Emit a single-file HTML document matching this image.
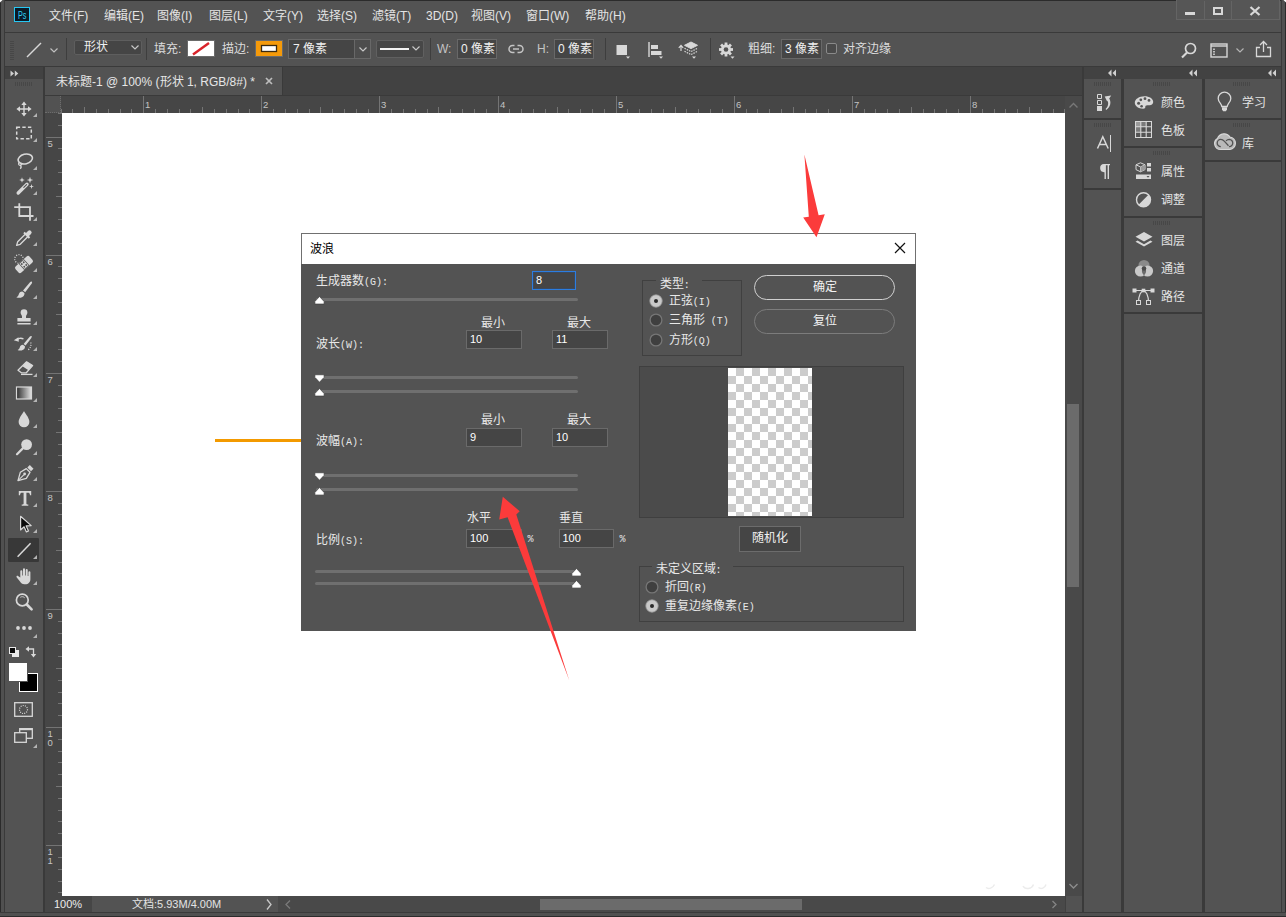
<!DOCTYPE html>
<html lang="zh-CN">
<head>
<meta charset="utf-8">
<title>Photoshop - 波浪</title>
<style>
*{box-sizing:border-box;margin:0;padding:0}
html,body{width:1286px;height:917px;overflow:hidden;background:#535353;font-family:"Liberation Sans",sans-serif}
body{font-family:"Liberation Sans",sans-serif;font-size:12px;color:#dcdcdc;position:relative}
.abs{position:absolute}
#app{position:absolute;left:0;top:0;width:1286px;height:917px;background:#535353;overflow:hidden}
/* frame */
.frame-l{left:0;top:0;width:5px;height:917px;background:#505050;border-left:1px solid #2b2b2b;border-right:1px solid #3a3a3a}
.frame-r{left:1281px;top:0;width:5px;height:917px;background:#505050;border-right:1px solid #2b2b2b;border-left:1px solid #3a3a3a}
.frame-b{left:0;top:912px;width:1286px;height:5px;background:#505050;border-bottom:1px solid #2b2b2b;border-top:1px solid #3a3a3a}
.frame-t{left:0;top:0;width:1286px;height:1px;background:#2b2b2b}
/* menubar */
#menubar{left:5px;top:1px;width:1276px;height:31px;background:#535353}
#menubar .m{position:absolute;top:7px;font-size:12px;color:#e4e4e4;white-space:nowrap;line-height:16px}
.sepH{background:#3a3a3a;height:1px}
/* options bar */
#optbar{left:5px;top:33px;width:1276px;height:33px;background:#535353}
#optbar .t{position:absolute;top:8px;line-height:16px;font-size:12px;color:#dcdcdc;white-space:nowrap}
.inp{position:absolute;background:#454545;border:1px solid #686868;color:#f0f0f0;font-size:12px;line-height:17px;padding-left:4px;white-space:nowrap}
.vsep{position:absolute;width:1px;background:#3e3e3e}
/* toolbox */
#tools{left:5px;top:67px;width:38px;height:845px;background:#535353}
#tools .hd{position:absolute;left:0;top:0;width:38px;height:12px;background:#424242}
/* doc */
#doc{left:45px;top:67px;width:1037px;height:845px;background:#424242}
#tab{left:0;top:0;width:238px;height:29px;background:#535353;border-right:1px solid #3a3a3a}
#tab .t{position:absolute;left:11px;top:7px;font-size:12px;line-height:16px;color:#e6e6e6;white-space:nowrap}
.hr text,.vr text{font-family:"Liberation Sans",sans-serif;font-size:9.5px;fill:#c4c4c4}
#canvas{left:62px;top:113px;width:1003px;height:783px;background:#fff}
/* right panels */
.pcol{position:absolute;background:#535353}
.phd{position:absolute;background:#424242;height:12px}
.pitem{position:absolute;font-size:12px;color:#e4e4e4;line-height:16px;white-space:nowrap}
.grip{height:4px;background:repeating-linear-gradient(90deg,#474747 0,#474747 1px,transparent 1px,transparent 2px)}
.grip2{width:4px;height:20px;background:repeating-linear-gradient(0deg,#474747 0,#474747 1px,transparent 1px,transparent 2px)}
/* dialog */
#dlg{left:301px;top:233px;width:615px;height:398px;background:#535353}
#dlg .title{position:absolute;left:0;top:0;width:615px;height:31px;background:#fff;border:1px solid #707070;border-bottom:none}
#dlg .title span{position:absolute;left:8px;top:7px;font-size:12px;color:#000;line-height:16px}
.dt{position:absolute;font-size:12px;line-height:14px;color:#e8e8e8;white-space:nowrap}
.dt i{font-style:normal;font-family:"Liberation Mono",monospace;font-size:10px;letter-spacing:0;line-height:0}
.din i{font-style:normal;font-family:"Liberation Sans",sans-serif;font-size:11px}
.din{position:absolute;background:#454545;border:1px solid #6a6a6a;color:#fff;font-size:11px;line-height:16px;padding-left:3px}
.trk{position:absolute;height:3px;background:#6f6f6f;border-radius:1.5px}
</style>
</head>
<body>
<div id="app">
  <div class="abs frame-t"></div>
  <div class="abs frame-l"></div>
  <div class="abs frame-r"></div>
  <div class="abs frame-b"></div>
  <svg class="abs" style="left:0;top:0" width="3" height="3" viewBox="0 0 3 3"><path d="M0 0H2.500L0 2.500Z" fill="#fff"/></svg>
  <svg class="abs" style="left:1283px;top:0" width="3" height="3" viewBox="0 0 3 3"><path d="M3 0H0.500L3 2.500Z" fill="#fff"/></svg>

  <!-- MENUBAR -->
  <div id="menubar" class="abs">
    <div class="abs" style="left:9px;top:6px;width:16px;height:15px;background:#0a1a26;border:1px solid #27c7f3"></div><span class="abs" style="left:13px;top:9px;font-size:10px;line-height:11px;font-weight:normal;color:#2fd0f8;letter-spacing:0;transform:scaleX(.72);transform-origin:0 0">Ps</span>
    <span class="m" style="left:44px">文件(F)</span>
    <span class="m" style="left:99px">编辑(E)</span>
    <span class="m" style="left:152px">图像(I)</span>
    <span class="m" style="left:204px">图层(L)</span>
    <span class="m" style="left:258px">文字(Y)</span>
    <span class="m" style="left:312px">选择(S)</span>
    <span class="m" style="left:367px">滤镜(T)</span>
    <span class="m" style="left:421px">3D(D)</span>
    <span class="m" style="left:466px">视图(V)</span>
    <span class="m" style="left:521px">窗口(W)</span>
    <span class="m" style="left:580px">帮助(H)</span>
    <div class="abs" style="left:1171px;top:-1px;width:104px;height:20px;background:#565656;border:1px solid #646464;border-top:none"></div>
    <div class="abs" style="left:1199px;top:0;width:1px;height:18px;background:#646464"></div>
    <div class="abs" style="left:1226px;top:0;width:1px;height:18px;background:#646464"></div>
    <div class="abs" style="left:1180px;top:11px;width:10px;height:3px;background:#d8d8d8"></div>
    <div class="abs" style="left:1208px;top:6px;width:10px;height:8px;border:2px solid #d8d8d8"></div>
    <svg class="abs" style="left:1244px;top:5px" width="12" height="10" viewBox="0 0 12 10"><path d="M1.500 1L10.500 9M10.500 1L1.500 9" stroke="#d8d8d8" stroke-width="2.200"/></svg>
  </div>
  <div class="abs sepH" style="left:5px;top:32px;width:1276px"></div>

  <!-- OPTIONS BAR -->
  <div id="optbar" class="abs">
    
    <div class="abs grip2" style="left:5px;top:7px"></div>
    <svg class="abs" style="left:20px;top:8px" width="18" height="18" viewBox="0 0 18 18"><path d="M2 16L16 2" stroke="#d8d8d8" stroke-width="1.400"/></svg>
    <svg class="abs" style="left:44px;top:14px" width="10" height="7" viewBox="0 0 10 7"><path d="M1.500 1.500L5 5L8.500 1.500" stroke="#c0c0c0" stroke-width="1.200" fill="none"/></svg>
    <div class="vsep" style="left:61px;top:5px;height:22px"></div>
    <div class="inp" style="left:69px;top:7px;width:68px;height:15px;line-height:13px;padding-left:9px;background:#454545;border-color:#5e5e5e;border-radius:2px">形状</div>
    <svg class="abs" style="left:125px;top:11px" width="10" height="7" viewBox="0 0 10 7"><path d="M1.500 1.500L5 5L8.500 1.500" stroke="#c8c8c8" stroke-width="1.200" fill="none"/></svg>
    <div class="vsep" style="left:141px;top:5px;height:22px"></div>
    <span class="t" style="left:149px">填充:</span>
    <svg class="abs" style="left:182px;top:7px" width="28" height="17" viewBox="0 0 28 17"><rect x="0.500" y="0.500" width="27" height="16" fill="#fff" stroke="#6a6a6a"/><path d="M6 14.500L22 3" stroke="#d8232a" stroke-width="2.400"/></svg>
    <span class="t" style="left:217px">描边:</span>
    <svg class="abs" style="left:250px;top:7px" width="28" height="17" viewBox="0 0 28 17"><rect x="0.500" y="0.500" width="27" height="16" fill="#f59a0a" stroke="#6a6a6a"/><rect x="6.500" y="5.500" width="15" height="6" fill="#fff" stroke="#3a2a10" stroke-width="1.300"/></svg>
    <div class="inp" style="left:283px;top:6px;width:67px;height:20px;line-height:18px">7 像素</div>
    <div class="inp" style="left:349px;top:6px;width:17px;height:20px;background:#4d4d4d"></div>
    <svg class="abs" style="left:353px;top:13px" width="10" height="7" viewBox="0 0 10 7"><path d="M1.500 1.500L5 5L8.500 1.500" stroke="#c8c8c8" stroke-width="1.200" fill="none"/></svg>
    <div class="inp" style="left:371px;top:7px;width:48px;height:18px;background:#474747;border-color:#606060;border-radius:2px"></div>
    <div class="abs" style="left:375px;top:15px;width:29px;height:2px;background:#f4f4f4"></div>
    <svg class="abs" style="left:406px;top:12px" width="10" height="7" viewBox="0 0 10 7"><path d="M1.500 1.500L5 5L8.500 1.500" stroke="#c8c8c8" stroke-width="1.200" fill="none"/></svg>
    <div class="vsep" style="left:425px;top:5px;height:22px"></div>
    <span class="t" style="left:432px;color:#c4c4c4">W:</span>
    <div class="inp" style="left:452px;top:6px;width:40px;height:20px;line-height:18px;padding-left:3px">0 像素</div>
    <svg class="abs" style="left:503px;top:11px" width="16" height="10" viewBox="0 0 16 10"><path d="M6.500 1.500H4.500a3.500 3.500 0 0 0 0 7H6.500M9.500 1.500H11.500a3.500 3.500 0 0 1 0 7H9.500M5 5H11" fill="none" stroke="#c4c4c4" stroke-width="1.500"/></svg>
    <span class="t" style="left:532px;color:#c4c4c4">H:</span>
    <div class="inp" style="left:549px;top:6px;width:40px;height:20px;line-height:18px;padding-left:3px">0 像素</div>
    <div class="vsep" style="left:600px;top:5px;height:22px"></div>
    <svg class="abs" style="left:610px;top:10px" width="16" height="16" viewBox="0 0 16 16"><rect x="1.500" y="2" width="10.500" height="10" fill="#d8d8d8"/><path d="M11 13.500h4L13 15.800Z" fill="#d8d8d8"/></svg>
    <svg class="abs" style="left:642px;top:8px" width="17" height="18" viewBox="0 0 17 18"><path d="M2 1V16" stroke="#d8d8d8" stroke-width="1.400"/><rect x="4" y="4" width="7" height="4" fill="#d8d8d8"/><rect x="4" y="10" width="10.500" height="4" fill="#d8d8d8"/><path d="M12 15.500h4L14 17.800Z" fill="#d8d8d8"/></svg>
    <svg class="abs" style="left:673px;top:8px" width="21" height="19" viewBox="0 0 21 19"><path d="M3 10V4.500M0.800 6.800L3 4.300L5.200 6.800" fill="none" stroke="#d8d8d8" stroke-width="1.200"/><path d="M13 1L19.500 4.300L13 7.600L6.500 4.300Z" fill="#d8d8d8" stroke="#d8d8d8" stroke-width="1"/><path d="M6.500 7.300L13 10.600L19.500 7.300M6.500 10.300L13 13.600L19.500 10.300" fill="none" stroke="#d8d8d8" stroke-width="1.200" stroke-dasharray="1.500 1"/><path d="M14 15.500h4L16 17.800Z" fill="#d8d8d8"/></svg>
    <div class="vsep" style="left:705px;top:5px;height:22px"></div>
    <svg class="abs" style="left:713px;top:8px" width="18" height="19" viewBox="0 0 18 19"><g transform="translate(8 8.500)"><g fill="#d8d8d8"><rect x="-1.400" y="-7" width="2.800" height="14"/><rect x="-1.400" y="-7" width="2.800" height="14" transform="rotate(45)"/><rect x="-1.400" y="-7" width="2.800" height="14" transform="rotate(90)"/><rect x="-1.400" y="-7" width="2.800" height="14" transform="rotate(135)"/><circle r="5"/></g><circle r="2.300" fill="#535353"/></g><path d="M12.500 15.500h4L14.500 17.800Z" fill="#d8d8d8"/></svg>
    <span class="t" style="left:743px">粗细:</span>
    <div class="inp" style="left:776px;top:6px;width:41px;height:20px;line-height:18px;padding-left:3px">3 像素</div>
    <div class="abs" style="left:821px;top:10px;width:11px;height:11px;border:1px solid #8a8a8a;border-radius:2px;background:#4a4a4a"></div>
    <span class="t" style="left:838px">对齐边缘</span>
    <!-- right icons -->
    <svg class="abs" style="left:1175px;top:9px" width="18" height="17" viewBox="0 0 18 17"><circle cx="10.500" cy="6.500" r="5" fill="none" stroke="#d8d8d8" stroke-width="1.700"/><path d="M7 10.500L2 15.500" stroke="#d8d8d8" stroke-width="2.200"/></svg>
    <svg class="abs" style="left:1205px;top:10px" width="18" height="15" viewBox="0 0 18 15"><rect x="1" y="1" width="16" height="13" fill="none" stroke="#d8d8d8" stroke-width="1.400"/><path d="M1 3H17" stroke="#d8d8d8" stroke-width="1.400"/><path d="M4 5.500V12" stroke="#d8d8d8" stroke-width="1.600" stroke-dasharray="1.500 1"/></svg>
    <svg class="abs" style="left:1230px;top:14px" width="10" height="7" viewBox="0 0 10 7"><path d="M1.500 1.500L5 5L8.500 1.500" stroke="#b4b4b4" stroke-width="1.200" fill="none"/></svg>
    <svg class="abs" style="left:1250px;top:7px" width="17" height="18" viewBox="0 0 17 18"><path d="M5 7.500H1.500V16.500H15.500V7.500H12" fill="none" stroke="#d8d8d8" stroke-width="1.300"/><path d="M8.500 12V2M5 5L8.500 1.500L12 5" fill="none" stroke="#d8d8d8" stroke-width="1.300"/></svg>

  </div>
  <div class="abs sepH" style="left:5px;top:66px;width:1276px"></div>

  <!-- TOOLBOX -->
  <div id="tools" class="abs">
    <div class="hd"></div>
    <svg class="abs" style="left:5px;top:3px" width="9" height="7" viewBox="0 0 9 7"><path d="M0.500 0.500L4 3.500L0.500 6.500ZM4.800 0.500L8.300 3.500L4.800 6.500Z" fill="#d0d0d0"/></svg>
    <div class="abs grip" style="left:10px;top:15px;width:18px"></div>
    <svg class="abs" style="left:8.5px;top:31.7px" width="20" height="20" viewBox="0 0 20 20"><path d="M10 4.500V15.500M4.500 10H15.500" stroke="#d8d8d8" stroke-width="1.400"/><path d="M10 2.400L7.300 6H12.700ZM10 17.600L7.300 14H12.700ZM2.400 10L6 7.300V12.700ZM17.600 10L14 7.300V12.700Z" fill="#d8d8d8"/></svg><svg class="abs" style="left:27.5px;top:46.2px" width="4" height="4" viewBox="0 0 4 4"><path d="M4 0V4H0Z" fill="#b4b4b4"/></svg>
    <svg class="abs" style="left:9px;top:56.4px" width="20" height="20" viewBox="0 0 20 20"><rect x="2.700" y="4.200" width="14.600" height="11.600" fill="none" stroke="#d8d8d8" stroke-width="1.500" stroke-dasharray="3.400 2.200"/></svg><svg class="abs" style="left:27.5px;top:70.9px" width="4" height="4" viewBox="0 0 4 4"><path d="M4 0V4H0Z" fill="#b4b4b4"/></svg>
    <svg class="abs" style="left:9.2px;top:84px" width="20" height="20" viewBox="0 0 20 20"><ellipse cx="11.300" cy="8" rx="7.300" ry="4.800" transform="rotate(-14 11.300 8)" fill="none" stroke="#d8d8d8" stroke-width="1.600"/><path d="M5.300 11.500c-1.300 1.200-0.600 2.800 0.800 2.800s1.800-1.500 0.700-2.300M6.500 14.300c0.800 1 0.800 2.400-0.300 3.400" fill="none" stroke="#d8d8d8" stroke-width="1.300"/></svg><svg class="abs" style="left:27.5px;top:98.5px" width="4" height="4" viewBox="0 0 4 4"><path d="M4 0V4H0Z" fill="#b4b4b4"/></svg>
    <svg class="abs" style="left:10px;top:109.4px" width="20" height="20" viewBox="0 0 20 20"><path d="M3.200 17L12 8.200" stroke="#d8d8d8" stroke-width="3.400" stroke-linecap="round"/><path d="M8.800 11.400L11.600 8.600" stroke="#535353" stroke-width="1.100" stroke-linecap="round"/><path d="M7 1.200L7.700 3.300L9.800 4L7.700 4.700L7 6.800L6.300 4.700L4.200 4L6.300 3.300ZM15 0.700L15.800 3.200L18.300 4L15.800 4.800L15 7.300L14.200 4.800L11.700 4L14.200 3.200ZM16.500 8L17.100 9.900L19 10.500L17.100 11.100L16.500 13L15.900 11.100L14 10.500L15.900 9.900Z" fill="#d8d8d8"/></svg><svg class="abs" style="left:27.5px;top:123.9px" width="4" height="4" viewBox="0 0 4 4"><path d="M4 0V4H0Z" fill="#b4b4b4"/></svg>
    <svg class="abs" style="left:9px;top:135px" width="20" height="20" viewBox="0 0 20 20"><path d="M5.300 1.300V14H19.500M0.200 5.200H16V18.700" fill="none" stroke="#d8d8d8" stroke-width="1.800"/></svg><svg class="abs" style="left:27.5px;top:149.5px" width="4" height="4" viewBox="0 0 4 4"><path d="M4 0V4H0Z" fill="#b4b4b4"/></svg>
    <svg class="abs" style="left:9px;top:160.7px" width="20" height="20" viewBox="0 0 20 20"><path d="M11.200 6.300L3.700 13.800L2.600 17.400L6.200 16.300L13.700 8.800" fill="none" stroke="#d8d8d8" stroke-width="1.300" stroke-linejoin="round"/><path d="M9.300 5.200L10.700 3.800L12 5.100L14 3.100a2.100 2.100 0 0 1 3 3L15 8.100L16.200 9.300L14.800 10.700Z" fill="#d8d8d8"/></svg><svg class="abs" style="left:27.5px;top:175.2px" width="4" height="4" viewBox="0 0 4 4"><path d="M4 0V4H0Z" fill="#b4b4b4"/></svg>
    <svg class="abs" style="left:8px;top:185.6px" width="22" height="22" viewBox="0 0 22 22"><circle cx="6" cy="6" r="4.300" fill="none" stroke="#d8d8d8" stroke-width="1.200" stroke-dasharray="1 1.400"/><g transform="rotate(-42 11 11.500)"><rect x="1.500" y="7.300" width="19" height="8.400" rx="2.200" fill="#d8d8d8"/><rect x="7.600" y="7.300" width="6.800" height="8.400" fill="#535353"/><rect x="8.300" y="8" width="5.400" height="7" fill="#d8d8d8"/><circle cx="9.700" cy="9.700" r="0.900" fill="#535353"/><circle cx="12.300" cy="9.700" r="0.900" fill="#535353"/><circle cx="9.700" cy="13.300" r="0.900" fill="#535353"/><circle cx="12.300" cy="13.300" r="0.900" fill="#535353"/></g></svg><svg class="abs" style="left:27.5px;top:201.1px" width="4" height="4" viewBox="0 0 4 4"><path d="M4 0V4H0Z" fill="#b4b4b4"/></svg>
    <svg class="abs" style="left:8.6px;top:213px" width="20" height="20" viewBox="0 0 20 20"><path d="M17.800 1.800c0.500 0.400 0.300 1.200-0.200 2L11.200 12.300L9 10.600L16 2.300c0.600-0.700 1.300-0.900 1.800-0.500ZM8.300 11.400l2.200 1.700c0.300 2.200-1.200 4.200-3.700 4.600c-1.700 0.300-3.300 0.200-4.500-0.400c1.600-0.700 2.100-1.500 2.500-3c0.400-1.700 1.600-2.900 3.500-2.900Z" fill="#d8d8d8"/></svg><svg class="abs" style="left:27.5px;top:227.5px" width="4" height="4" viewBox="0 0 4 4"><path d="M4 0V4H0Z" fill="#b4b4b4"/></svg>
    <svg class="abs" style="left:9.2px;top:239.5px" width="20" height="20" viewBox="0 0 20 20"><path d="M10 2.300a3.400 3.400 0 0 1 3.400 3.400c0 1.400-1.400 2.400-1.400 3.900v1.400h4.600v3.600H3.400V11h4.600V9.600c0-1.500-1.400-2.500-1.400-3.900A3.400 3.400 0 0 1 10 2.300Z" fill="#d8d8d8"/><rect x="3.400" y="16" width="13.200" height="1.500" fill="#d8d8d8"/></svg><svg class="abs" style="left:27.5px;top:254px" width="4" height="4" viewBox="0 0 4 4"><path d="M4 0V4H0Z" fill="#b4b4b4"/></svg>
    <svg class="abs" style="left:8.4px;top:265.7px" width="20" height="20" viewBox="0 0 20 20"><g transform="translate(2.500 1.500) scale(0.900)"><path d="M17.800 1.800c0.500 0.400 0.300 1.200-0.200 2L11.200 12.300L9 10.600L16 2.300c0.600-0.700 1.300-0.900 1.800-0.500ZM8.300 11.400l2.200 1.700c0.300 2.200-1.200 4.200-3.700 4.600c-1.700 0.300-3.300 0.200-4.500-0.400c1.600-0.700 2.100-1.500 2.500-3c0.400-1.700 1.600-2.900 3.500-2.900Z" fill="#d8d8d8"/></g><path d="M3.500 7.500c1.200-2.300 4.500-3 7-1.500" fill="none" stroke="#d8d8d8" stroke-width="1.400"/><path d="M0.800 7.200L5.500 4.200L5.800 8.800Z" fill="#d8d8d8"/><path d="M17.700 9.500c0.800 2.800-0.300 5.800-2.800 7.500" fill="none" stroke="#d8d8d8" stroke-width="1.200" stroke-dasharray="1 1.300"/></svg><svg class="abs" style="left:27.5px;top:280.2px" width="4" height="4" viewBox="0 0 4 4"><path d="M4 0V4H0Z" fill="#b4b4b4"/></svg>
    <svg class="abs" style="left:9.5px;top:291.4px" width="20" height="20" viewBox="0 0 20 20"><path d="M11.600 3.800L17.600 7.600L11.300 14.800H6.400L3 12.200Z" fill="none" stroke="#d8d8d8" stroke-width="1.300" stroke-linejoin="round"/><path d="M11.600 3.800L17.600 7.600L13.500 12.300L7.400 8.300Z" fill="#d8d8d8"/><path d="M6 16.400H17.500" stroke="#d8d8d8" stroke-width="1.300"/></svg><svg class="abs" style="left:27.5px;top:305.9px" width="4" height="4" viewBox="0 0 4 4"><path d="M4 0V4H0Z" fill="#b4b4b4"/></svg>
    <svg class="abs" style="left:9px;top:316.4px" width="20" height="20" viewBox="0 0 20 20"><defs><linearGradient id="gg" x1="0" x2="1" y1="0" y2="0"><stop offset="0" stop-color="#2c2c2c"/><stop offset="1" stop-color="#e4e4e4"/></linearGradient></defs><rect x="2.500" y="4" width="15" height="12" fill="url(#gg)" stroke="#d8d8d8" stroke-width="1.200"/></svg><svg class="abs" style="left:27.5px;top:330.9px" width="4" height="4" viewBox="0 0 4 4"><path d="M4 0V4H0Z" fill="#b4b4b4"/></svg>
    <svg class="abs" style="left:9.4px;top:342px" width="20" height="20" viewBox="0 0 20 20"><path d="M10 2.300C10 2.300 4.600 9.200 4.600 12.900a5.400 5.400 0 0 0 10.800 0C15.400 9.200 10 2.300 10 2.300Z" fill="#d8d8d8"/></svg><svg class="abs" style="left:27.5px;top:356.5px" width="4" height="4" viewBox="0 0 4 4"><path d="M4 0V4H0Z" fill="#b4b4b4"/></svg>
    <svg class="abs" style="left:8.6px;top:369.5px" width="20" height="20" viewBox="0 0 20 20"><circle cx="12.600" cy="7.600" r="5.400" fill="#d8d8d8"/><path d="M8.800 11.400L3 17.200" stroke="#d8d8d8" stroke-width="2.200" stroke-linecap="round"/></svg><svg class="abs" style="left:27.5px;top:384px" width="4" height="4" viewBox="0 0 4 4"><path d="M4 0V4H0Z" fill="#b4b4b4"/></svg>
    <svg class="abs" style="left:9.5px;top:395.7px" width="20" height="20" viewBox="0 0 20 20"><path d="M3 17.600L5.300 9.300L11.300 5.600L15 9.300L11.300 15.300Z" fill="none" stroke="#d8d8d8" stroke-width="1.300" stroke-linejoin="round"/><path d="M3 17.600L8.800 11.800" stroke="#d8d8d8" stroke-width="1.100"/><circle cx="9.600" cy="11" r="1.400" fill="#d8d8d8"/><path d="M12.300 4.600L14.800 2.100L18.500 5.800L16 8.300Z" fill="#d8d8d8"/></svg><svg class="abs" style="left:27.5px;top:410.2px" width="4" height="4" viewBox="0 0 4 4"><path d="M4 0V4H0Z" fill="#b4b4b4"/></svg>
    <svg class="abs" style="left:10px;top:421px" width="20" height="20" viewBox="0 0 20 20"><path d="M3.800 3H16.200V7.200H15C14.800 5.300 14.300 4.700 12.600 4.700H11.400V15.200c0 1 0.400 1.300 1.900 1.400V17.800H6.700V16.600c1.500-0.100 1.900-0.400 1.900-1.400V4.700H7.400C5.700 4.700 5.200 5.300 5 7.200H3.800Z" fill="#d8d8d8"/></svg><svg class="abs" style="left:27.5px;top:435.5px" width="4" height="4" viewBox="0 0 4 4"><path d="M4 0V4H0Z" fill="#b4b4b4"/></svg>
    <svg class="abs" style="left:9.5px;top:447.3px" width="20" height="20" viewBox="0 0 20 20"><path d="M5.600 2.300V16L9.100 12.800L11.400 17.900L13.500 16.900L11.200 11.900L16.200 11.600Z" fill="#0a0a0a" stroke="#d8d8d8" stroke-width="1.200" stroke-linejoin="round"/></svg><svg class="abs" style="left:27.5px;top:461.8px" width="4" height="4" viewBox="0 0 4 4"><path d="M4 0V4H0Z" fill="#b4b4b4"/></svg>
    <div class="abs" style="left:3px;top:471px;width:31px;height:24px;background:#383838;border-radius:1px"></div><svg class="abs" style="left:9px;top:473px" width="20" height="20" viewBox="0 0 20 20"><path d="M3.600 16.800L16.600 3.200" stroke="#d8d8d8" stroke-width="1.500"/></svg><svg class="abs" style="left:27.5px;top:487.5px" width="4" height="4" viewBox="0 0 4 4"><path d="M4 0V4H0Z" fill="#b4b4b4"/></svg>
    <svg class="abs" style="left:9px;top:499px" width="20" height="20" viewBox="0 0 20 20"><path d="M6.300 11.500V5.300a1 1 0 0 1 2 0V9.500h0.700V3.300a1 1 0 0 1 2 0V9.500h0.700V3.900a1 1 0 0 1 2 0V10h0.700V6.300a1 1 0 0 1 2 0V13c0 3.200-2 5.300-5.200 5.300h-0.800c-2.100 0-3.400-1-4.600-3L2.600 11.300c-0.600-1.100 0.800-2 1.700-1Z" fill="#d8d8d8"/></svg><svg class="abs" style="left:27.5px;top:513.5px" width="4" height="4" viewBox="0 0 4 4"><path d="M4 0V4H0Z" fill="#b4b4b4"/></svg>
    <svg class="abs" style="left:9px;top:525.3px" width="20" height="20" viewBox="0 0 20 20"><circle cx="8.300" cy="8" r="5.900" fill="none" stroke="#d8d8d8" stroke-width="1.700"/><path d="M12.800 12.500L17.600 17.300" stroke="#d8d8d8" stroke-width="2.600" stroke-linecap="round"/><path d="M6.300 5.300c1.500-1 3.300-0.700 4.400 0.500" fill="none" stroke="#d8d8d8" stroke-width="0.900"/></svg>
    <svg class="abs" style="left:9px;top:551px" width="20" height="20" viewBox="0 0 20 20"><circle cx="4" cy="10" r="1.900" fill="#d8d8d8"/><circle cx="10" cy="10" r="1.900" fill="#d8d8d8"/><circle cx="16" cy="10" r="1.900" fill="#d8d8d8"/></svg>
    <svg class="abs" style="left:27.500px;top:567px" width="4" height="4" viewBox="0 0 4 4"><path d="M4 0V4H0Z" fill="#b4b4b4"/></svg>
    <div class="abs" style="left:7px;top:583px;width:7px;height:7px;background:#e8e8e8"></div><div class="abs" style="left:4px;top:580px;width:7px;height:7px;background:#0a0a0a;border:1px solid #e8e8e8"></div>
    <svg class="abs" style="left:20px;top:579px" width="12" height="12" viewBox="0 0 12 12"><path d="M3.500 3H8.500V8" fill="none" stroke="#d8d8d8" stroke-width="1.300"/><path d="M0.500 3L4 0.300V5.700ZM8.500 11.500L5.800 8H11.200Z" fill="#d8d8d8"/></svg>
    <div class="abs" style="left:14px;top:606px;width:19px;height:19px;background:#000;border:1px solid #fff"></div><div class="abs" style="left:3px;top:595px;width:20px;height:20px;background:#fff;border:1px solid #535353"></div>
    <svg class="abs" style="left:9px;top:635px" width="19" height="15" viewBox="0 0 19 15"><rect x="0.700" y="0.700" width="17.600" height="13.600" fill="none" stroke="#d8d8d8" stroke-width="1.300"/><circle cx="9.500" cy="7.500" r="4" fill="none" stroke="#d8d8d8" stroke-width="1.200" stroke-dasharray="1 1.200"/></svg>
    <svg class="abs" style="left:9px;top:661px" width="19" height="15" viewBox="0 0 19 15"><rect x="5.700" y="0.700" width="12.600" height="9.600" fill="none" stroke="#d8d8d8" stroke-width="1.300"/><path d="M5.700 1.200H18.300" stroke="#d8d8d8" stroke-width="2"/><rect x="0.700" y="4.700" width="11.600" height="9.600" fill="#535353" stroke="#d8d8d8" stroke-width="1.300"/></svg><svg class="abs" style="left:27.500px;top:677px" width="4" height="4" viewBox="0 0 4 4"><path d="M4 0V4H0Z" fill="#b4b4b4"/></svg>
    
  </div>
  <div class="abs" style="left:43px;top:67px;width:2px;height:845px;background:#3a3a3a"></div>

  <!-- DOCUMENT -->
  <div id="doc" class="abs">
    <div id="tab" class="abs"><span class="t">未标题-1 @ 100% (形状 1, RGB/8#) *</span><svg class="abs" style="left:220px;top:10px" width="8" height="8" viewBox="0 0 8 8"><path d="M1 1L7 7M7 1L1 7" stroke="#bdbdbd" stroke-width="1.700"/></svg></div>
    <div class="abs" style="left:0;top:28px;width:1037px;height:1px;background:#3a3a3a"></div>
    <div class="abs" style="left:0;top:29px;width:1037px;height:17px;background:#464646"></div>
    <div class="abs" style="left:0;top:29px;width:16px;height:17px;background:#525252;border-right:1px dotted #6c6c6c;border-bottom:1px dotted #6c6c6c"></div>
    <div class="abs" style="left:0;top:46px;width:17px;height:783px;background:#464646"></div>
  </div>
  <div class="abs" style="left:46px;top:96px"><svg class="hr" width="1020" height="17" viewBox="0 0 1020 17"><path d="M15.5 13V17M26.5 13V17M38.5 11V17M50.5 13V17M62.5 13V17M74.5 13V17M85.5 13V17M97.5 0V17M109.5 13V17M121.5 13V17M133.5 13V17M144.5 13V17M156.5 11V17M168.5 13V17M180.5 13V17M192.5 13V17M203.5 13V17M215.5 0V17M227.5 13V17M239.5 13V17M251.5 13V17M263.5 13V17M274.5 11V17M286.5 13V17M298.5 13V17M310.5 13V17M322.5 13V17M333.5 0V17M345.5 13V17M357.5 13V17M369.5 13V17M381.5 13V17M392.5 11V17M404.5 13V17M416.5 13V17M428.5 13V17M440.5 13V17M452.5 0V17M463.5 13V17M475.5 13V17M487.5 13V17M499.5 13V17M511.5 11V17M522.5 13V17M534.5 13V17M546.5 13V17M558.5 13V17M570.5 0V17M581.5 13V17M593.5 13V17M605.5 13V17M617.5 13V17M629.5 11V17M640.5 13V17M652.5 13V17M664.5 13V17M676.5 13V17M688.5 0V17M700.5 13V17M711.5 13V17M723.5 13V17M735.5 13V17M747.5 11V17M759.5 13V17M770.5 13V17M782.5 13V17M794.5 13V17M806.5 0V17M818.5 13V17M829.5 13V17M841.5 13V17M853.5 13V17M865.5 11V17M877.5 13V17M888.5 13V17M900.5 13V17M912.5 13V17M924.5 0V17M936.5 13V17M948.5 13V17M959.5 13V17M971.5 13V17M983.5 11V17M995.5 13V17M1007.5 13V17M1018.5 13V17" stroke="#747474" stroke-width="1" fill="none"/><text x="99.0" y="11.5">1</text><text x="217.0" y="11.5">2</text><text x="335.0" y="11.5">3</text><text x="454.0" y="11.5">4</text><text x="572.0" y="11.5">5</text><text x="690.0" y="11.5">6</text><text x="808.0" y="11.5">7</text><text x="926.0" y="11.5">8</text></svg></div>
  <div class="abs" style="left:46px;top:96px"><svg class="vr" width="16" height="800" viewBox="0 0 16 800"><path d="M12 17.5H16M12 29.5H16M0 41.5H16M12 52.5H16M12 64.5H16M12 76.5H16M12 88.5H16M10 100.5H16M12 111.5H16M12 123.5H16M12 135.5H16M12 147.5H16M0 159.5H16M12 170.5H16M12 182.5H16M12 194.5H16M12 206.5H16M10 218.5H16M12 229.5H16M12 241.5H16M12 253.5H16M12 265.5H16M0 277.5H16M12 289.5H16M12 300.5H16M12 312.5H16M12 324.5H16M10 336.5H16M12 348.5H16M12 359.5H16M12 371.5H16M12 383.5H16M0 395.5H16M12 407.5H16M12 418.5H16M12 430.5H16M12 442.5H16M10 454.5H16M12 466.5H16M12 477.5H16M12 489.5H16M12 501.5H16M0 513.5H16M12 525.5H16M12 537.5H16M12 548.5H16M12 560.5H16M10 572.5H16M12 584.5H16M12 596.5H16M12 607.5H16M12 619.5H16M0 631.5H16M12 643.5H16M12 655.5H16M12 666.5H16M12 678.5H16M10 690.5H16M12 702.5H16M12 714.5H16M12 725.5H16M12 737.5H16M0 749.5H16M12 761.5H16M12 773.5H16M12 785.5H16M12 796.5H16" stroke="#747474" stroke-width="1" fill="none"/><text x="1.5" y="50.5">5</text><text x="1.5" y="168.5">6</text><text x="1.5" y="286.5">7</text><text x="1.5" y="404.5">8</text><text x="1.5" y="522.5">9</text><text x="1.5" y="640.5">1</text><text x="1.5" y="649.5">0</text><text x="1.5" y="758.5">1</text><text x="1.5" y="767.5">1</text></svg></div>
  <div id="canvas" class="abs"></div>
  
  <!-- scrollbars + status -->
  <div class="abs" style="left:1065px;top:96px;width:17px;height:816px;background:#494949"></div>
  <svg class="abs" style="left:1067px;top:100px" width="13" height="10" viewBox="0 0 13 10"><path d="M2.5 7.5L6.5 3.5L10.5 7.5" stroke="#787878" stroke-width="1.4" fill="none"/></svg>
  <svg class="abs" style="left:1067px;top:881px" width="13" height="10" viewBox="0 0 13 10"><path d="M2.5 3L6.5 7L10.5 3" stroke="#8c8c8c" stroke-width="1.4" fill="none"/></svg>
  <div class="abs" style="left:1067px;top:404px;width:12px;height:183px;background:#6b6b6b"></div>
  <div class="abs" style="left:45px;top:896px;width:1020px;height:16px;background:#494949"></div>
  <div class="abs" style="left:92px;top:896px;width:186px;height:16px;background:#535353"></div>
  <div class="abs" style="left:45px;top:896px;width:47px;height:16px;background:#464646"></div>
  <span class="abs" style="left:54px;top:897px;font-size:11px;line-height:14px;color:#ececec">100%</span>
  <span class="abs" style="left:132px;top:897px;font-size:11px;line-height:14px;color:#e4e4e4;white-space:nowrap">文档:5.93M/4.00M</span>
  <svg class="abs" style="left:264px;top:898px" width="10" height="13" viewBox="0 0 10 13"><path d="M3 1.5L7 6.5L3 11.5" stroke="#c8c8c8" stroke-width="1.3" fill="none"/></svg>
  <svg class="abs" style="left:283px;top:898px" width="10" height="13" viewBox="0 0 10 13"><path d="M7 2.5L3 6.5L7 10.5" stroke="#7a7a7a" stroke-width="1.3" fill="none"/></svg>
  <svg class="abs" style="left:1049px;top:898px" width="10" height="13" viewBox="0 0 10 13"><path d="M3.5 3L7 6.5L3.5 10" stroke="#858585" stroke-width="1.3" fill="none"/></svg>
  <div class="abs" style="left:540px;top:899px;width:262px;height:11px;background:#6b6b6b"></div>
  <div class="abs" style="left:1065px;top:896px;width:1px;height:16px;background:#404040"></div>
  <div class="abs" style="left:1066px;top:896px;width:16px;height:16px;background:#525252"></div>
  <svg class="abs" style="left:980px;top:878px" width="72" height="16" viewBox="0 0 72 16"><path d="M6 9.500c2.500 2 7 0.500 8.500-3M43 8c2 4 9 3 10.500-1.500M58.500 9.500c2.500 2 6.500 0.500 7.500-3" fill="none" stroke="#ececec" stroke-width="1.400"/></svg>
  <!-- orange shape line on canvas -->
  <div class="abs" style="left:215px;top:439px;width:90px;height:3px;background:#f39a00"></div>


  <!-- RIGHT PANELS -->
  
  <div class="abs" style="left:1082px;top:67px;width:199px;height:845px;background:#3a3a3a"></div>
  <div class="phd" style="left:1084px;top:67px;width:197px"></div>
  <svg class="abs" style="left:1107px;top:69px" width="10" height="8" viewBox="0 0 10 8"><path d="M4.5 0.5L1 4L4.5 7.5ZM9 0.5L5.5 4L9 7.5Z" fill="#d0d0d0"/></svg>
  <svg class="abs" style="left:1188px;top:69px" width="10" height="8" viewBox="0 0 10 8"><path d="M4.5 0.5L1 4L4.5 7.5ZM9 0.5L5.5 4L9 7.5Z" fill="#d0d0d0"/></svg>
  <svg class="abs" style="left:1267px;top:69px" width="10" height="8" viewBox="0 0 10 8"><path d="M4.5 0.5L1 4L4.5 7.5ZM9 0.5L5.5 4L9 7.5Z" fill="#d0d0d0"/></svg>
  <!-- column 1 -->
  <div class="pcol" style="left:1084px;top:79px;width:37px;height:39px"></div>
  <div class="pcol" style="left:1084px;top:120px;width:37px;height:68px"></div>
  <div class="pcol" style="left:1084px;top:190px;width:37px;height:722px"></div>
  <div class="abs grip" style="left:1094px;top:82px;width:18px"></div><div class="abs grip" style="left:1094px;top:123px;width:18px"></div>
  <svg class="abs" style="left:1095px;top:93px" width="18" height="19" viewBox="0 0 18 19"><path d="M2.5 1.5h4v4h-4zM2.5 7.5h4v4h-4z" fill="none" stroke="#d8d8d8" stroke-width="1"/><rect x="2" y="13" width="5" height="5" fill="#d8d8d8"/><path d="M9.700 3.600L16.200 2.400L12.200 8.600Z" fill="#d8d8d8"/><path d="M13.600 4.800C17 9 15.300 14.300 11.200 17L10.600 16.100C13.400 13.300 14 9.600 12 6.400Z" fill="#d8d8d8"/></svg>
  <svg class="abs" style="left:1096px;top:134px" width="18" height="20" viewBox="0 0 18 20"><path d="M1.5 14.5L6.8 2.8L12.2 14.5M3.4 10.5H10.2" fill="none" stroke="#d8d8d8" stroke-width="1.5"/><path d="M14.5 1V18" stroke="#d8d8d8" stroke-width="1"/></svg>
  <svg class="abs" style="left:1097px;top:163px" width="15" height="17" viewBox="0 0 15 17"><path d="M7 1H13V2.2H12V16H10.6V2.2H8.9V16H7.5V9.2A4.1 4.1 0 0 1 7 1Z" fill="#d8d8d8"/></svg>
  <!-- column 2 -->
  <div class="pcol" style="left:1124px;top:79px;width:78px;height:67px"></div>
  <div class="pcol" style="left:1124px;top:148px;width:78px;height:68px"></div>
  <div class="pcol" style="left:1124px;top:218px;width:78px;height:94px"></div>
  <div class="pcol" style="left:1124px;top:314px;width:78px;height:598px"></div>
  <div class="abs grip" style="left:1153px;top:82px;width:18px"></div><div class="abs grip" style="left:1153px;top:151px;width:18px"></div><div class="abs grip" style="left:1153px;top:221px;width:18px"></div>
  <!-- palette -->
  <svg class="abs" style="left:1134px;top:95px" width="20" height="15" viewBox="0 0 20 15"><path d="M10.5 1.2C5.2 1.2 0.8 4 0.8 7.8c0 3.3 3.6 5.9 8.3 5.9 1.6 0 2.3-0.7 2.2-1.6-0.1-1 0.4-1.9 2.1-1.9h2.2c2.2 0 3.6-1.2 3.6-3.2C19.200 3.500 15.400 1.200 10.500 1.200Z" fill="#d8d8d8"/><circle cx="4.600" cy="8.300" r="1.500" fill="#535353"/><circle cx="6.800" cy="4.800" r="1.400" fill="#535353"/><circle cx="11" cy="3.700" r="1.400" fill="#535353"/><circle cx="15" cy="5.400" r="1.400" fill="#535353"/><circle cx="7.600" cy="11.200" r="1.300" fill="#535353"/></svg>
  <span class="pitem" style="left:1161px;top:95px">颜色</span>
  <!-- swatches grid -->
  <svg class="abs" style="left:1135px;top:121px" width="17" height="18" viewBox="0 0 17 18"><rect x="1" y="1" width="5" height="5" fill="#9a9a9a"/><rect x="6" y="1" width="5" height="5" fill="#7a7a7a"/><rect x="1" y="6" width="5" height="5" fill="#7a7a7a"/><path d="M0.500 0.500H16.500V16.500H0.500ZM5.800 0.500V16.500M11.200 0.500V16.500M0.500 5.800H16.500M0.500 11.200H16.500" fill="none" stroke="#d8d8d8" stroke-width="1.100"/></svg>
  <span class="pitem" style="left:1161px;top:123px">色板</span>
  <!-- properties -->
  <svg class="abs" style="left:1135px;top:162px" width="17" height="18" viewBox="0 0 17 18"><path d="M5.500 0.800L10 2.800V7.600L5.500 9.800L1 7.600V2.800Z" fill="none" stroke="#d8d8d8" stroke-width="1"/><path d="M1 2.800L5.500 4.900L10 2.800M5.500 4.900V9.800" fill="none" stroke="#d8d8d8" stroke-width="1"/><path d="M5.500 4.900L10 2.800V7.600L5.500 9.800Z" fill="#9a9a9a"/><rect x="12" y="1" width="4" height="3.500" fill="#d8d8d8"/><rect x="12" y="6" width="4" height="3.500" fill="#d8d8d8"/><rect x="1" y="12.500" width="15" height="4.500" fill="#d8d8d8"/><path d="M11.500 14L13 15.800L14.500 14Z" fill="#535353"/></svg>
  <span class="pitem" style="left:1161px;top:164px">属性</span>
  <!-- adjustments -->
  <svg class="abs" style="left:1135px;top:191px" width="18" height="18" viewBox="0 0 18 18"><circle cx="8.500" cy="8.700" r="7" fill="none" stroke="#d8d8d8" stroke-width="1.400"/><path d="M13.450 3.750A7 7 0 0 1 3.550 13.650Z" fill="#d8d8d8"/></svg>
  <span class="pitem" style="left:1161px;top:192px">调整</span>
  <!-- layers -->
  <svg class="abs" style="left:1134px;top:231px" width="20" height="19" viewBox="0 0 20 19"><path d="M10 1L18.500 5.800L10 10.600L1.500 5.800Z" fill="#d8d8d8"/><path d="M3.600 9.500L1.500 10.700L10 15.600L18.500 10.700L16.400 9.500L10 13.200Z" fill="#d8d8d8"/></svg>
  <span class="pitem" style="left:1161px;top:233px">图层</span>
  <!-- channels -->
  <svg class="abs" style="left:1134px;top:259px" width="20" height="19" viewBox="0 0 20 19"><circle cx="10" cy="6.500" r="5.600" fill="#8a8a8a"/><circle cx="6.500" cy="12" r="5.600" fill="#c9c9c9"/><circle cx="13.500" cy="12" r="5.600" fill="#c9c9c9"/><path d="M10 7.600a5.600 5.600 0 0 1 0 8.800a5.600 5.600 0 0 1 0-8.800Z" fill="#6a6a6a"/><circle cx="10" cy="9.500" r="2.300" fill="#4a4a4a"/></svg>
  <span class="pitem" style="left:1161px;top:261px">通道</span>
  <!-- paths -->
  <svg class="abs" style="left:1132px;top:287px" width="23" height="19" viewBox="0 0 23 19"><path d="M6.500 15.500C6.500 8 9 4 11.500 4S16.500 8 16.500 15.500" fill="none" stroke="#d8d8d8" stroke-width="1.200"/><path d="M3 3.500H20" stroke="#d8d8d8" stroke-width="1"/><rect x="0.500" y="1.500" width="4" height="4" fill="#d8d8d8"/><rect x="18.500" y="1.500" width="4" height="4" fill="#d8d8d8"/><rect x="4.500" y="13.500" width="4" height="4" fill="#535353" stroke="#d8d8d8" stroke-width="1"/><rect x="14.500" y="13.500" width="4" height="4" fill="#535353" stroke="#d8d8d8" stroke-width="1"/><rect x="9.700" y="1.700" width="3.600" height="3.600" fill="#d8d8d8"/></svg>
  <span class="pitem" style="left:1161px;top:289px">路径</span>
  <!-- column 3 -->
  <div class="pcol" style="left:1205px;top:79px;width:76px;height:39px"></div>
  <div class="pcol" style="left:1205px;top:120px;width:76px;height:40px"></div>
  <div class="pcol" style="left:1205px;top:162px;width:76px;height:750px"></div>
  <div class="abs grip" style="left:1233px;top:82px;width:18px"></div><div class="abs grip" style="left:1233px;top:123px;width:18px"></div>
  <!-- bulb -->
  <svg class="abs" style="left:1216px;top:91px" width="17" height="22" viewBox="0 0 17 22"><path d="M8.500 1.200A6.300 6.300 0 0 0 2.200 7.500c0 2.400 1.300 3.800 2.500 5.300c0.700 0.900 1 1.700 1.100 2.700h5.400c0.100-1 0.400-1.800 1.100-2.700c1.200-1.500 2.500-2.900 2.500-5.300A6.300 6.300 0 0 0 8.500 1.200Z" fill="none" stroke="#d8d8d8" stroke-width="1.300"/><path d="M6 16.300h5v2.200L9.800 20.300H7.200L6 18.500Z" fill="#d8d8d8"/></svg>
  <span class="pitem" style="left:1242px;top:95px">学习</span>
  <!-- CC cloud -->
  <svg class="abs" style="left:1213px;top:133px" width="24" height="18" viewBox="0 0 24 18"><path d="M7.500 16.500A6 6 0 0 1 4.500 5.400A7 7 0 0 1 17 4.200A6.200 6.200 0 0 1 17 16.500Z" fill="#b9b9b9" stroke="#d8d8d8" stroke-width="1.200"/><path d="M7.800 13.600a3.600 3.600 0 0 1 0-7.200c1.500 0 2.500 0.700 3.700 2l4 4.300M16 13.600a3.600 3.600 0 0 0 0.300-7.200c-1.500 0-2.400 0.600-3.300 1.500" fill="none" stroke="#535353" stroke-width="1.300"/></svg>
  <span class="pitem" style="left:1242px;top:136px">库</span>


  <!-- DIALOG -->
  <div id="dlg" class="abs">
    <div class="title"><span>波浪</span></div>
    <svg class="abs" style="left:593px;top:9px" width="12" height="12" viewBox="0 0 12 12"><path d="M1 1L11 11M11 1L1 11" stroke="#111" stroke-width="1.200"/></svg>
    <span class="dt" style="left:15px;top:40.5px;">生成器数<i>(G):</i></span>
    <div class="din" style="left:231px;top:38px;width:44px;height:19px;line-height:16px;border:1px solid #2b7de1;box-shadow:inset 0 0 0 1px #3a4a60"><i>8</i></div>
    <div class="trk" style="left:15px;top:65.3px;width:262px"></div>
    <svg class="abs" style="left:13.3px;top:63.3px" width="11" height="8.800" viewBox="0 0 10 8"><path d="M5 0.500L9.200 5V7.300H0.800V5Z" fill="#fff" stroke="#3c3c3c" stroke-width="0.600"/></svg>
    <span class="dt" style="left:180.4px;top:82.8px;">最小</span>
    <span class="dt" style="left:266.3px;top:82.8px;">最大</span>
    <div class="din" style="left:165px;top:97px;width:56px;height:19px;line-height:16px;"><i>10</i></div>
    <div class="din" style="left:251px;top:97px;width:56px;height:19px;line-height:16px;"><i>11</i></div>
    <span class="dt" style="left:15px;top:104px;">波长<i>(W):</i></span>
    <div class="trk" style="left:15px;top:143.1px;width:262px"></div>
    <svg class="abs" style="left:13.3px;top:140.7px" width="11" height="8.800" viewBox="0 0 10 8"><path d="M5 7.500L9.200 3V0.700H0.800V3Z" fill="#fff" stroke="#3c3c3c" stroke-width="0.600"/></svg>
    <div class="trk" style="left:15px;top:157.1px;width:262px"></div>
    <svg class="abs" style="left:13.3px;top:155.3px" width="11" height="8.800" viewBox="0 0 10 8"><path d="M5 0.500L9.200 5V7.300H0.800V5Z" fill="#fff" stroke="#3c3c3c" stroke-width="0.600"/></svg>
    <span class="dt" style="left:180.4px;top:179.8px;">最小</span>
    <span class="dt" style="left:266.3px;top:179.8px;">最大</span>
    <div class="din" style="left:165px;top:195px;width:56px;height:19px;line-height:16px;"><i>9</i></div>
    <div class="din" style="left:251px;top:195px;width:56px;height:19px;line-height:16px;"><i>10</i></div>
    <span class="dt" style="left:15px;top:201px;">波幅<i>(A):</i></span>
    <div class="trk" style="left:15px;top:241.4px;width:262px"></div>
    <svg class="abs" style="left:13.3px;top:239px" width="11" height="8.800" viewBox="0 0 10 8"><path d="M5 7.500L9.200 3V0.700H0.800V3Z" fill="#fff" stroke="#3c3c3c" stroke-width="0.600"/></svg>
    <div class="trk" style="left:15px;top:255.4px;width:262px"></div>
    <svg class="abs" style="left:13.3px;top:253.6px" width="11" height="8.800" viewBox="0 0 10 8"><path d="M5 0.500L9.200 5V7.300H0.800V5Z" fill="#fff" stroke="#3c3c3c" stroke-width="0.600"/></svg>
    <span class="dt" style="left:165.9px;top:278.2px;">水平</span>
    <span class="dt" style="left:257.9px;top:278.2px;">垂直</span>
    <div class="din" style="left:165px;top:296px;width:56px;height:19px;line-height:16px;"><i>100</i></div>
    <span class="dt" style="left:226.5px;top:297.5px;"><i>%</i></span>
    <div class="din" style="left:257.5px;top:296px;width:55.5px;height:19px;line-height:16px;"><i>100</i></div>
    <span class="dt" style="left:318.5px;top:297.5px;"><i>%</i></span>
    <span class="dt" style="left:15px;top:300px;">比例<i>(S):</i></span>
    <div class="trk" style="left:14px;top:337.4px;width:264px"></div>
    <svg class="abs" style="left:269.8px;top:334.7px" width="11" height="8.800" viewBox="0 0 10 8"><path d="M5 0.500L9.200 5V7.300H0.800V5Z" fill="#fff" stroke="#3c3c3c" stroke-width="0.600"/></svg>
    <div class="trk" style="left:14px;top:348.7px;width:264px"></div>
    <svg class="abs" style="left:269.8px;top:346.5px" width="11" height="8.800" viewBox="0 0 10 8"><path d="M5 0.500L9.200 5V7.300H0.800V5Z" fill="#fff" stroke="#3c3c3c" stroke-width="0.600"/></svg>
    <div class="abs" style="left:341px;top:47px;width:99.500px;height:75.500px;border:1px solid #404040"></div>
    <div class="abs" style="left:355px;top:43px;width:46px;height:12px;background:#535353"></div>
    <span class="dt" style="left:358.7px;top:44px;">类型<i>:</i></span>
    <svg class="abs" style="left:348.2px;top:60.5px" width="14" height="14" viewBox="0 0 14 14"><circle cx="7" cy="7" r="6.200" fill="#c9c9c9" stroke="#9a9a9a" stroke-width="0.800"/><circle cx="7" cy="7" r="2" fill="#2a2a2a"/></svg>
    <span class="dt" style="left:367.8px;top:60.5px;">正弦<i>(I)</i></span>
    <svg class="abs" style="left:348.2px;top:80.4px" width="14" height="14" viewBox="0 0 14 14"><circle cx="7" cy="7" r="5.900" fill="#3f3f3f" stroke="#767676" stroke-width="1.300"/></svg>
    <span class="dt" style="left:367.8px;top:80.4px;">三角形<i> (T)</i></span>
    <svg class="abs" style="left:348.2px;top:99.8px" width="14" height="14" viewBox="0 0 14 14"><circle cx="7" cy="7" r="5.900" fill="#3f3f3f" stroke="#767676" stroke-width="1.300"/></svg>
    <span class="dt" style="left:367.8px;top:99.8px;">方形<i>(Q)</i></span>
    <div class="abs" style="left:453px;top:42px;width:141px;height:25px;border:1.500px solid #d0d0d0;border-radius:13px;text-align:center;line-height:22px;font-size:12px;color:#f2f2f2">确定</div>
    <div class="abs" style="left:453px;top:76px;width:141px;height:25px;border:1.500px solid #7c7c7c;border-radius:13px;text-align:center;line-height:22px;font-size:12px;color:#f2f2f2">复位</div>
    <div class="abs" style="left:337.5px;top:133px;width:265px;height:152px;background:#4b4b4b;border:1px solid #3f3f3f"></div>
    <div class="abs" style="left:427px;top:135px;width:84px;height:148px;background-color:#fff;background-image:conic-gradient(#ccc 25%,#fff 0 50%,#ccc 0 75%,#fff 0);background-size:16px 16px;background-position:0 0"></div>
    <div class="abs" style="left:438px;top:293px;width:61.500px;height:25.500px;background:#454545;border:1px solid #6c6c6c;text-align:center;line-height:23px;font-size:12px;color:#f2f2f2">随机化</div>
    <div class="abs" style="left:337.500px;top:333px;width:265.500px;height:55.500px;border:1px solid #404040"></div>
    <div class="abs" style="left:351px;top:329px;width:81px;height:12px;background:#535353"></div>
    <span class="dt" style="left:354.5px;top:329.4px;">未定义区域<i>:</i></span>
    <svg class="abs" style="left:344.4px;top:346.5px" width="14" height="14" viewBox="0 0 14 14"><circle cx="7" cy="7" r="5.900" fill="#3f3f3f" stroke="#767676" stroke-width="1.300"/></svg>
    <span class="dt" style="left:363.8px;top:346.5px;">折回<i>(R)</i></span>
    <svg class="abs" style="left:344.4px;top:366.2px" width="14" height="14" viewBox="0 0 14 14"><circle cx="7" cy="7" r="6.200" fill="#c9c9c9" stroke="#9a9a9a" stroke-width="0.800"/><circle cx="7" cy="7" r="2" fill="#2a2a2a"/></svg>
    <span class="dt" style="left:363.8px;top:366.2px;">重复边缘像素<i>(E)</i></span>
  </div>

  <svg class="abs" style="left:0;top:0;pointer-events:none" width="1286" height="917" viewBox="0 0 1286 917">
    <path d="M804.400 154.500L818.600 215.300L824.800 214.300L816.500 237.300L803.200 217.500L808.800 216.700Z" fill="#fb3b3b"/>
    <path d="M569.300 680.500L516.300 514.600L519.700 511.200L502.800 496.800L499.200 519.600L507.600 517.200Z" fill="#fb3b3b"/>
  </svg>
</div>
</body>
</html>
